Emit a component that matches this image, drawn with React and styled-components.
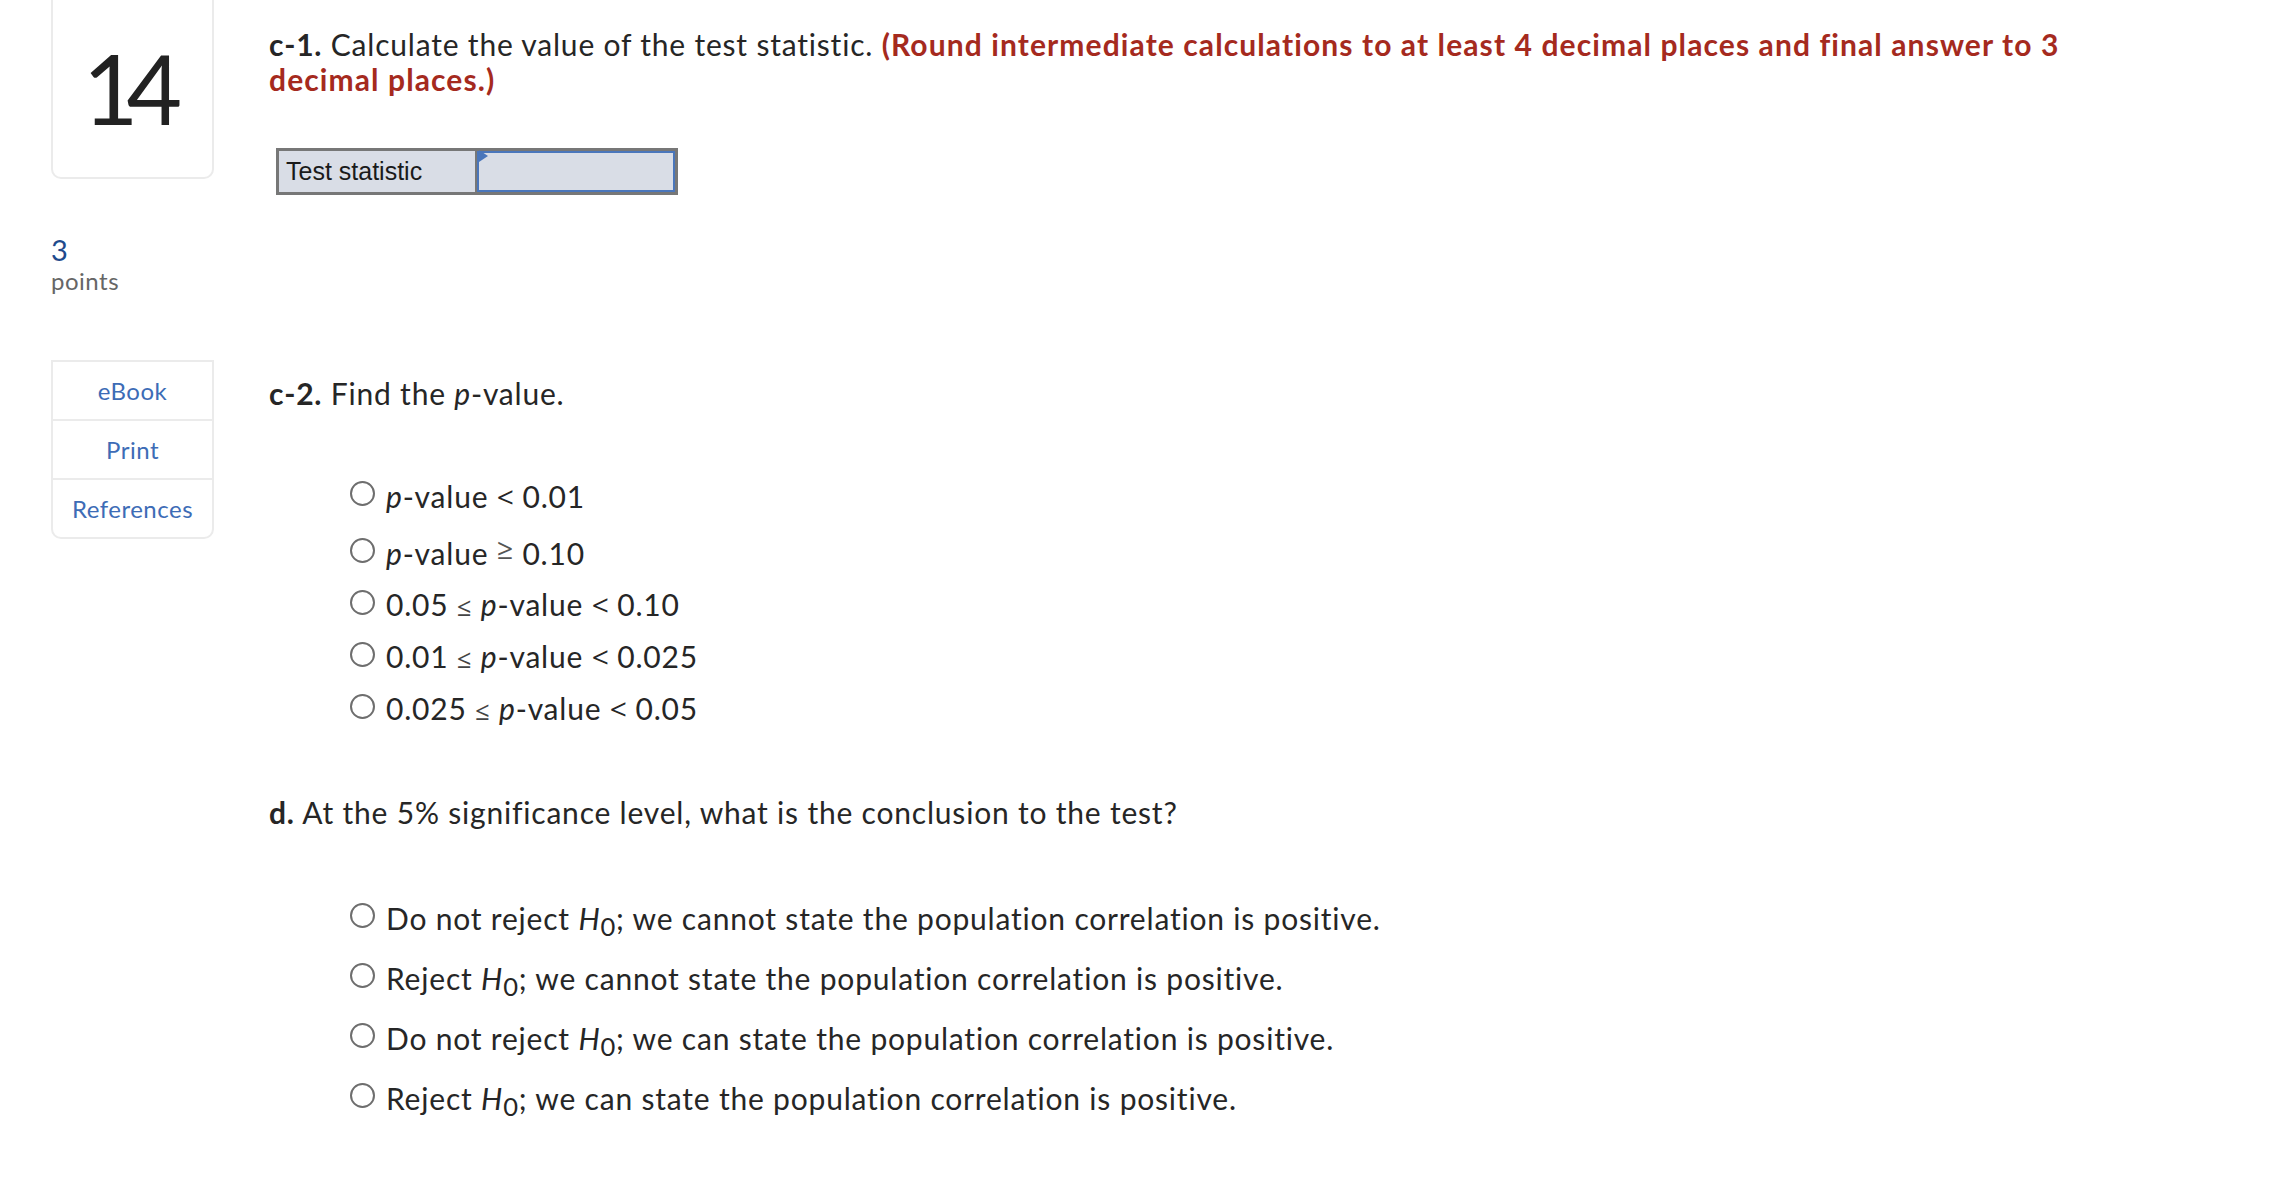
import React from 'react';
import styled, {createGlobalStyle} from 'styled-components';

const GlobalStyle = createGlobalStyle`
  html, body {
    margin: 0;
    padding: 0;
    background: #ffffff;
  }
  body {
    font-family: Lato, "Open Sans", "Liberation Sans", sans-serif;
    color: #262626;
    letter-spacing: 0.8px;
  }
`

const pOptions = [
  {id: 'a', pre: null, sign: '<', value: '0.01'},
  {id: 'b', pre: null, sign: '≥', value: '0.10'},
  {id: 'c', pre: '0.05', sign: '<', value: '0.10'},
  {id: 'd', pre: '0.01', sign: '<', value: '0.025'},
  {id: 'e', pre: '0.025', sign: '<', value: '0.05'},
];

const conclusions = [
  {id: 'a', verb: 'Do not reject', rest: 'we cannot state the population correlation is positive.'},
  {id: 'b', verb: 'Reject', rest: 'we cannot state the population correlation is positive.'},
  {id: 'c', verb: 'Do not reject', rest: 'we can state the population correlation is positive.'},
  {id: 'd', verb: 'Reject', rest: 'we can state the population correlation is positive.'},
];

function PValue() {
  return <><Ital>p</Ital>-value</>
}

function App() {
  return (
    <Page>
      <GlobalStyle/>
      <Side>
        <NumberCard>14</NumberCard>
        <Points>
          <div className="num">3</div>
          <div className="label">points</div>
        </Points>
        <Tools>
          <Tool>eBook</Tool>
          <Tool>Print</Tool>
          <Tool>References</Tool>
        </Tools>
      </Side>

      <Main>
        <Prompt>
          <b>c-1.</b> Calculate the value of the test statistic.{' '}
          <Warn>(Round intermediate calculations to at least 4 decimal places and final answer to 3 decimal places.)</Warn>
        </Prompt>

        <AnswerTable>
          <div className="label">Test statistic</div>
          <div className="input"><span className="flag"/></div>
        </AnswerTable>

        <Prompt $top={181}>
          <b>c-2.</b> Find the <PValue/>.
        </Prompt>

        <Choices $top={59} $row={52}>
          {pOptions.map(o => (
            <Choice key={o.id} $lift={o.sign === '≥'}>
              <Radio/>
              <span>
                {o.pre && <>{o.pre} <Le>≤</Le> </>}
                <PValue/>{' '}
                {o.sign === '≥' ? <Raised>≥</Raised> : <Sym>&lt;</Sym>} {o.value}
              </span>
            </Choice>
          ))}
        </Choices>

        <Prompt $top={60}>
          <b>d.</b> At the 5% significance level, what is the conclusion to the test?
        </Prompt>

        <Choices $top={58} $row={60}>
          {conclusions.map(c => (
            <Choice key={c.id}>
              <Radio/>
              <span>{c.verb} <Hyp>H<sub>0</sub></Hyp>; {c.rest}</span>
            </Choice>
          ))}
        </Choices>
      </Main>
    </Page>
  );
}

export default App;

const Page = styled.div`
  display: grid;
  grid-template-columns: 163px 1fr;
  column-gap: 55px;
  padding-left: 51px;
  min-height: 1196px;
  box-sizing: border-box;
`

const Side = styled.aside`
  display: flex;
  flex-direction: column;
`

const NumberCard = styled.div`
  height: 179px;
  box-sizing: border-box;
  border: 2px solid #ebebeb;
  border-top: none;
  border-radius: 0 0 10px 10px;
  display: flex;
  align-items: center;
  justify-content: center;
  font-size: 96px;
  color: #222222;
  letter-spacing: -12px;
  padding: 0 0 2px 0;
  text-indent: -12px;
`

const Points = styled.div`
  margin-top: 54px;
  letter-spacing: 0.5px;

  .num {
    font-size: 29px;
    line-height: 34px;
    color: #1f4a8c;
  }

  .label {
    font-size: 24px;
    line-height: 28px;
    color: #666666;
  }
`

const Tools = styled.div`
  margin-top: 65px;
  border: 2px solid #ebebeb;
  border-radius: 0 0 10px 10px;
  display: flex;
  flex-direction: column;
`

const Tool = styled.div`
  height: 57px;
  display: flex;
  align-items: center;
  justify-content: center;
  font-size: 24px;
  letter-spacing: 0.5px;
  color: #3d6cb6;

  & + & {
    border-top: 2px solid #ebebeb;
  }
`

const Main = styled.main`
  padding-top: 27px;
  padding-right: 182px;
`

const Prompt = styled.p`
  margin: ${p => p.$top || 0}px 0 0;
  font-size: 30px;
  line-height: 35px;

  b {
    font-weight: 700;
  }
`

const Warn = styled.span`
  color: #a52a1e;
  font-weight: 700;
  letter-spacing: 1.1px;
`

const AnswerTable = styled.div`
  margin: 51px 0 0 7px;
  width: 402px;
  height: 47px;
  box-sizing: border-box;
  border: 3px solid #777777;
  display: grid;
  grid-template-columns: 198px 1fr;
  background: #d9dde6;
  letter-spacing: 0;

  .label {
    border-right: 2px solid #777777;
    font-family: "Liberation Sans", Arial, sans-serif;
    font-size: 25px;
    line-height: 41px;
    padding-left: 7px;
    color: #1a1a1a;
  }

  .input {
    position: relative;
    border: 2px solid #4a76bb;
  }

  .flag {
    position: absolute;
    left: 0;
    top: -3px;
    border-top: 6px solid transparent;
    border-bottom: 6px solid transparent;
    border-left: 9px solid #4a76bb;
  }
`

const Choices = styled.div`
  margin-top: ${p => p.$top}px;
  margin-left: 81px;
  display: flex;
  flex-direction: column;

  & > div {
    min-height: ${p => p.$row}px;
  }
`

const Choice = styled.div`
  display: flex;
  align-items: center;
  gap: 11px;
  font-size: 30px;
  line-height: 35px;
  padding-top: ${p => p.$lift ? 5 : 0}px;
`

const Radio = styled.span`
  flex: none;
  width: 25px;
  height: 25px;
  box-sizing: border-box;
  border: 2px solid #6e6e6e;
  border-radius: 50%;
  margin-top: -6px;
`

const Ital = styled.i`
  font-style: italic;
`

const Sym = styled.span`
  font-family: "Open Sans", "Noto Sans", sans-serif;
  letter-spacing: 0;
`

const Raised = styled.span`
  font-family: "Open Sans", "Noto Sans", sans-serif;
  font-size: 0.95em;
  color: #555555;
  vertical-align: 0.2em;
  line-height: 0;
`

const Le = styled.span`
  font-family: "Open Sans", "Noto Sans", sans-serif;
  font-size: 0.85em;
  color: #444444;
`

const Hyp = styled.i`
  font-style: italic;

  sub {
    font-style: normal;
    font-size: 0.85em;
    vertical-align: -0.25em;
    line-height: 0;
  }
`
